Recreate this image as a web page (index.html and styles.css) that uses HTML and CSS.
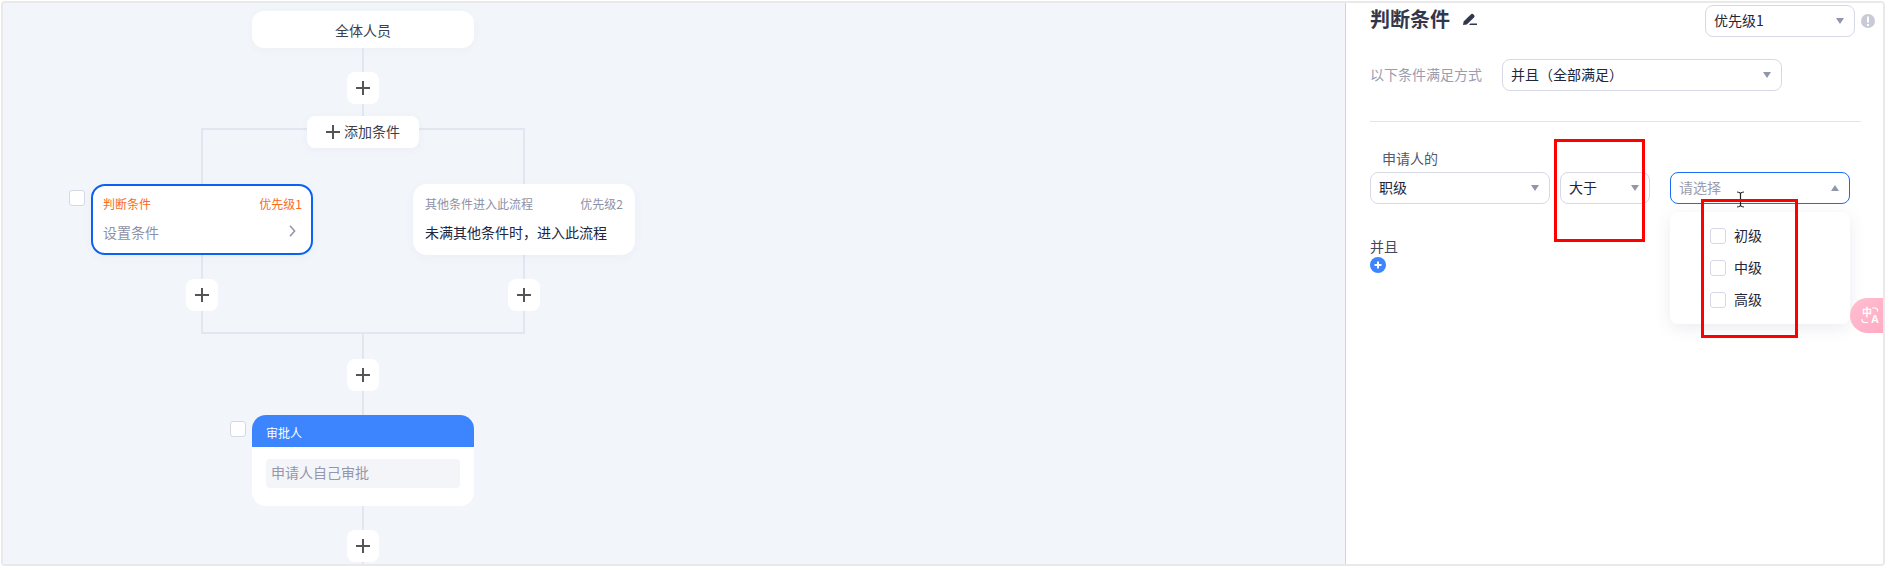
FILE: index.html
```html
<!DOCTYPE html>
<html lang="en">
  <head>
    <meta charset="UTF-8">
    <title>审批流程</title>
    <link rel="stylesheet" href="styles.css">
  </head>
  <body>
    <div class="window">
      <div class="canvas">
        <div class="flow">
          <div class="node_start">全体人员</div>
          <div class="link link_24"></div>
          <div class="plus"><svg viewBox="0 0 14 14"><path d="M7 0v14M0 7h14"/></svg></div>
          <div class="link link_12"></div>

          <div class="branch">
            <div class="add_condition"><svg viewBox="0 0 14 14"><path d="M7 0v14M0 7h14"/></svg><span>添加条件</span></div>
            <div class="branch_row">
              <div class="branch_col">
                <div class="card card_active">
                  <span class="check check_side"></span>
                  <div class="card_top orange"><span>判断条件</span><span>优先级1</span></div>
                  <div class="card_bottom muted">
                    <span>设置条件</span>
                    <svg class="chevron" viewBox="0 0 7 12"><path d="M1 .8 5.6 6 1 11.2"/></svg>
                  </div>
                </div>
                <div class="plus plus_branch"><svg viewBox="0 0 14 14"><path d="M7 0v14M0 7h14"/></svg></div>
              </div>
              <div class="branch_col">
                <div class="card">
                  <div class="card_top muted"><span>其他条件进入此流程</span><span>优先级2</span></div>
                  <div class="card_bottom dark"><span>未满其他条件时，进入此流程</span></div>
                </div>
                <div class="plus plus_branch"><svg viewBox="0 0 14 14"><path d="M7 0v14M0 7h14"/></svg></div>
              </div>
            </div>
          </div>

          <div class="link link_25"></div>
          <div class="plus"><svg viewBox="0 0 14 14"><path d="M7 0v14M0 7h14"/></svg></div>
          <div class="link link_24"></div>
          <div class="approver">
            <span class="check check_side check_approver"></span>
            <div class="approver_head">审批人</div>
            <div class="approver_body"><div class="approver_value">申请人自己审批</div></div>
          </div>
          <div class="link link_24"></div>
          <div class="plus"><svg viewBox="0 0 14 14"><path d="M7 0v14M0 7h14"/></svg></div>
          <div class="link link_24"></div>
        </div>
      </div>

      <div class="panel">
        <div class="panel_head">
          <div class="panel_title">
            <span>判断条件</span>
            <svg class="pen" viewBox="0 0 14 12"><path d="M0 12 .6 8.600 7.800 1.400C8.600.6 9.700.6 10.500 1.400L11 1.900C11.800 2.700 11.800 3.800 11 4.600L3.800 11.400ZM7.500 10.600H14V12H6Z"/></svg>
          </div>
          <div class="select select_priority">优先级1<i class="arrow"></i></div>
          <svg class="info" viewBox="0 0 14 14"><circle cx="7" cy="7" r="7"/><path d="M7 2.500v6M7 10v2"/></svg>
        </div>

        <div class="match_row">
          <span class="match_label">以下条件满足方式</span>
          <div class="select select_match">并且（全部满足）<i class="arrow"></i></div>
        </div>
        <div class="divider"></div>

        <div class="field_label">申请人的</div>
        <div class="field_row">
          <div class="select select_field">职级<i class="arrow"></i></div>
          <div class="select select_op">大于<i class="arrow"></i></div>
          <div class="select_wrap">
            <div class="select select_field select_open">请选择<i class="arrow arrow_up"></i></div>
            <div class="dropdown">
              <div class="option"><span class="check"></span>初级</div>
              <div class="option"><span class="check"></span>中级</div>
              <div class="option"><span class="check"></span>高级</div>
            </div>
          </div>
        </div>

        <div class="and_label">并且</div>
        <svg class="add_circle" viewBox="0 0 16 16"><circle cx="8" cy="8" r="8"/><path d="M8 4.500v7M4.500 8h7"/></svg>

        <svg class="cursor" viewBox="0 0 9 17"><path d="M1 1c2 0 3 .5 3.500 1.500C5 1.500 6 1 8 1M4.500 2.500v12M1 16c2 0 3-.5 3.500-1.500C5 15.500 6 16 8 16M2.800 8.500h3.400"/></svg>

        <div class="translate">
          <span class="translate_zh">中</span>
          <span class="translate_en">A</span>
          <svg viewBox="0 0 33 35"><path d="M22 10h3c1.500 0 2.500 1 2.500 2.500v1M12 21v1c0 1.500 1 2.500 2.500 2.500H18"/></svg>
        </div>

        <div class="mark mark_op"></div>
        <div class="mark mark_options"></div>
      </div>
    </div>
  </body>
</html>
```

FILE: styles.css
```css
body, html {
    border: none;
    padding: 0;
    margin: 0;
    background: #fff;
}
body {
    font-family: "Noto Sans CJK SC", "Liberation Sans", sans-serif;
    font-size: 14px;
    color: #1f2233;
}

.window {
    display: flex;
    width: 1880px;
    height: 561px;
    margin: 1px;
    border: 2px solid #e9e9ea;
    border-radius: 4px;
    overflow: hidden;
}

/* left side, the flow chart */
.canvas {
    width: 1342px;
    flex: none;
    padding-top: 8px;
    background: #f2f5fa;
}
.flow {
    display: flex;
    flex-direction: column;
    align-items: center;
    width: 720px;
}
.node_start {
    display: flex;
    align-items: center;
    justify-content: center;
    width: 222px;
    height: 37px;
    border-radius: 12px;
    background: #fff;
    color: #3c3f4c;
    box-shadow: 0 2px 8px rgba(90, 100, 150, 0.04);
}
.link {
    width: 2px;
    background: #e2e6f0;
}
.link_12 { height: 12px; }
.link_24 { height: 24px; flex: none; }
.link_25 { height: 25px; flex: none; }

.plus {
    display: flex;
    flex: none;
    align-items: center;
    justify-content: center;
    position: relative;
    width: 32px;
    height: 32px;
    border-radius: 8px;
    background: #fff;
}
.plus svg, .add_condition svg {
    width: 14px;
    height: 14px;
    fill: none;
    stroke: #555;
    stroke-width: 2;
}

.branch {
    position: relative;
    display: flex;
    flex-direction: column;
    align-items: center;
    width: 544px;
}
/* the lines of the two branches */
.branch::before {
    content: "";
    position: absolute;
    top: 12px;
    bottom: 0;
    left: 110px;
    right: 110px;
    border: 2px solid #e2e6f0;
}
.add_condition {
    display: flex;
    align-items: center;
    justify-content: center;
    gap: 4px;
    position: relative;
    width: 112px;
    height: 32px;
    border-radius: 8px;
    background: #fff;
    color: #3c3f4c;
    box-shadow: 0 2px 8px rgba(90, 100, 150, 0.05);
}
.add_condition span {
    margin-bottom: 2px;
}
.branch_row {
    display: flex;
    gap: 100px;
    margin-top: 36px;
    padding-bottom: 23px;
}
.branch_col {
    display: flex;
    flex-direction: column;
    align-items: center;
    width: 222px;
}
.plus_branch {
    margin-top: 24px;
}

.card {
    position: relative;
    box-sizing: border-box;
    width: 222px;
    height: 71px;
    padding: 10px 10px;
    border: 2px solid transparent;
    border-radius: 14px;
    background: #fff;
    box-shadow: 0 2px 10px rgba(90, 100, 150, 0.05);
}
.card_active {
    border-color: #0a62f0;
}
.card_active .card_top {
    margin-right: -1px;
}
.card_top {
    display: flex;
    justify-content: space-between;
    font-size: 12px;
    line-height: 16px;
}
.card_bottom {
    display: flex;
    justify-content: space-between;
    align-items: flex-start;
    margin-top: 10px;
    line-height: 20px;
}
.orange { color: #fa6a1e; }
.muted { color: #8e91a6; }
.dark { color: #23263a; }
.chevron {
    width: 7px;
    height: 12px;
    margin: 3px 5px 0 0;
    fill: none;
    stroke: #9598ac;
    stroke-width: 1.6;
}

.check {
    display: block;
    flex: none;
    box-sizing: border-box;
    width: 16px;
    height: 16px;
    border: 1px solid #d6d8e6;
    border-radius: 3px;
    background: #fff;
}
.check_side {
    position: absolute;
    top: 4px;
    left: -24px;
}
.check_approver {
    top: 6px;
    left: -22px;
}

.approver {
    position: relative;
    flex: none;
    width: 222px;
    height: 91px;
    border-radius: 14px;
    background: #fff;
}
.approver_head {
    height: 32px;
    padding-left: 14px;
    border-radius: 14px 14px 0 0;
    background: #3d85ff;
    color: #fff;
    font-size: 12px;
    line-height: 35px;
}
.approver_body {
    padding: 12px 14px 0;
}
.approver_value {
    height: 29px;
    padding-left: 5px;
    border-radius: 4px;
    background: #f4f5f8;
    color: #9497ab;
    line-height: 27px;
}

/* right side, the settings */
.panel {
    position: relative;
    flex: 1;
    padding-left: 24px;
    border-left: 1px solid #cdd3e2;
    background: #fff;
}
.panel_head {
    display: flex;
    align-items: center;
    padding-top: 2px;
}
.panel_title {
    display: flex;
    align-items: center;
    gap: 13px;
    width: 335px;
    margin-top: -4px;
    color: #33374b;
    font-size: 20px;
    font-weight: 700;
    line-height: 28px;
}
.pen {
    width: 14px;
    height: 12px;
    fill: #33374b;
}
.info {
    width: 14px;
    height: 14px;
    margin: 0 0 0 6px;
    fill: #c8cad8;
    stroke: #fff;
    stroke-width: 2;
}
.info circle {
    stroke: none;
}

.select {
    display: flex;
    align-items: center;
    justify-content: space-between;
    box-sizing: border-box;
    height: 32px;
    padding: 0 10px 2px 8px;
    border: 1px solid #d6d8e6;
    border-radius: 8px;
    background: #fff;
    color: #23263a;
}
.select_priority { width: 150px; }
.select_match { width: 280px; }
.select_field { width: 180px; }
.select_op { width: 90px; margin: 0 20px 0 10px; }
.select_open {
    border-color: #1a6cf5;
    color: #9a9db0;
}
.arrow {
    width: 0;
    height: 0;
    margin-top: 2px;
    border-top: 6px solid #9296ab;
    border-left: 4.5px solid transparent;
    border-right: 4.5px solid transparent;
}
.arrow_up {
    border-top: none;
    border-bottom: 6px solid #9296ab;
}

.match_row {
    display: flex;
    align-items: center;
    margin-top: 22px;
}
.match_label {
    width: 132px;
    padding-bottom: 2px;
    color: #9a9db0;
}
.divider {
    width: 491px;
    height: 1px;
    margin-top: 30px;
    background: #e4e5ec;
}
.field_label {
    margin-top: 26px;
    padding-left: 12px;
    color: #55586a;
    line-height: 20px;
}
.field_row {
    display: flex;
    margin-top: 4px;
}
.select_wrap {
    position: relative;
}
.dropdown {
    position: absolute;
    top: 40px;
    left: 0;
    display: flex;
    flex-direction: column;
    gap: 10px;
    box-sizing: border-box;
    width: 180px;
    height: 112px;
    padding: 13px 0 0 40px;
    border-radius: 8px;
    background: #fff;
    box-shadow: 0 4px 16px rgba(60, 70, 110, 0.1);
}
.option {
    display: flex;
    align-items: center;
    gap: 8px;
    height: 20px;
    padding-bottom: 2px;
    color: #23263a;
}
.option .check {
    margin-top: 2px;
}
.and_label {
    margin-top: 32px;
    color: #44475a;
    line-height: 20px;
}
.add_circle {
    display: block;
    width: 16px;
    height: 16px;
    margin-top: 1px;
    fill: #3d85ff;
    stroke: #fff;
    stroke-width: 2;
}
.add_circle circle {
    stroke: none;
}

.cursor {
    position: absolute;
    top: 188px;
    left: 390px;
    width: 9px;
    height: 17px;
    fill: none;
    stroke: #222;
    stroke-width: 1.2;
}
.translate {
    position: absolute;
    top: 295px;
    right: 0;
    width: 33px;
    height: 35px;
    border-radius: 18px 0 0 18px;
    background: linear-gradient(135deg, #ffbfd2, #ffabc3);
    color: #fff;
    font-size: 10px;
    font-weight: 700;
    line-height: 10px;
}
.translate svg {
    display: block;
    width: 33px;
    height: 35px;
    fill: none;
    stroke: #fff;
    stroke-width: 1.2;
}
.translate_zh {
    position: absolute;
    top: 9px;
    left: 12px;
}
.translate_en {
    position: absolute;
    top: 16px;
    left: 21px;
    font-family: "Liberation Sans", sans-serif;
    font-size: 11px;
}

/* red marks lying over the screenshot */
.mark {
    position: absolute;
    box-sizing: border-box;
    border: 3px solid #f00;
}
.mark_op {
    top: 136px;
    left: 208px;
    width: 91px;
    height: 103px;
}
.mark_options {
    top: 196px;
    left: 355px;
    width: 97px;
    height: 139px;
}
```
